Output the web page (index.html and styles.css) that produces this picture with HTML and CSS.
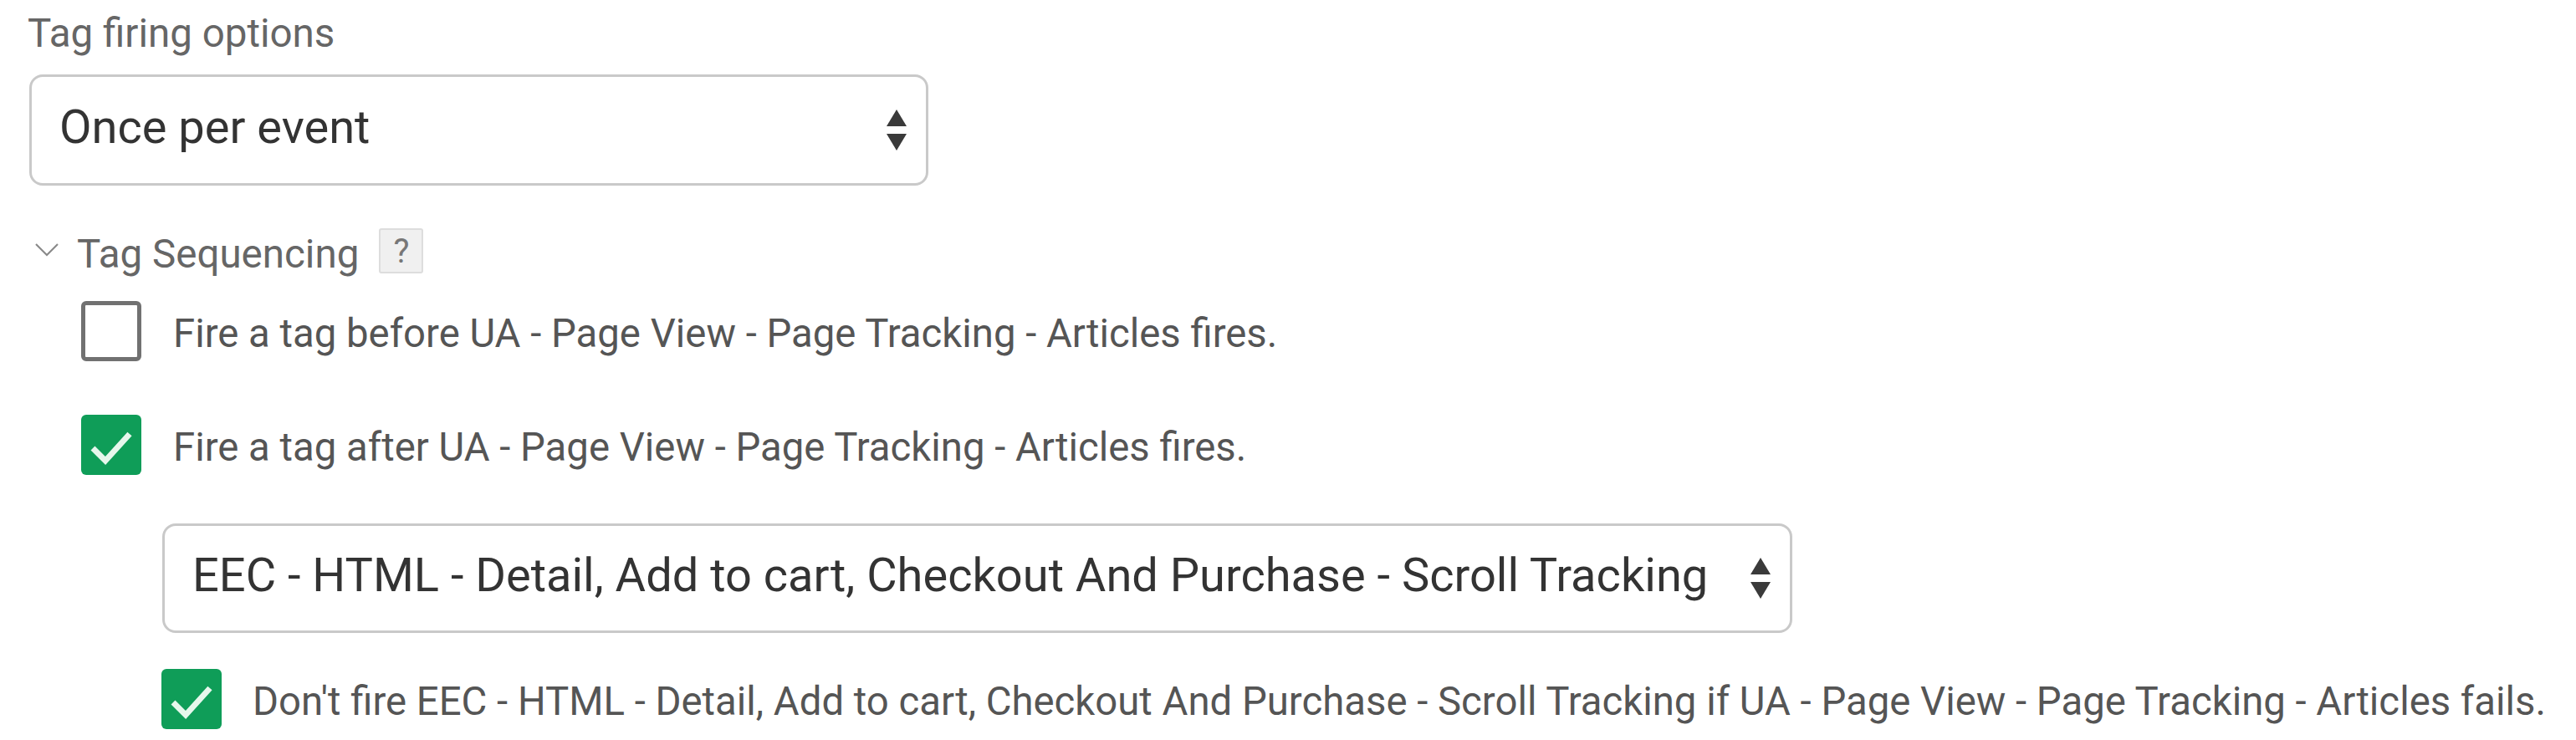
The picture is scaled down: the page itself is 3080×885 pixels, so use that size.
FILE: index.html
```html
<!DOCTYPE html>
<html>
<head>
<meta charset="utf-8">
<title>Tag firing options</title>
<link rel="stylesheet" href="styles.css">
</head>
<body>
<div class="panel">
  <div class="label">Tag firing options</div>
  <div class="select select-main">
    <span class="select-text">Once per event</span>
    <span class="arrows"><span class="up"></span><span class="down"></span></span>
  </div>

  <div class="seq-header">
    <svg class="chevron" width="30" height="18" viewBox="0 0 30 18"><polyline points="2,3 15,16 28,3" fill="none" stroke="#8a8a8a" stroke-width="2.2"/></svg>
    <span class="seq-title">Tag Sequencing</span>
    <span class="help">?</span>
  </div>

  <div class="check-row row-first">
    <span class="box unchecked"></span>
    <span class="row-text">Fire a tag before UA - Page View - Page Tracking - Articles fires.</span>
  </div>

  <div class="check-row row-second">
    <span class="box checked">
      <svg width="72" height="72" viewBox="0 0 72 72"><polyline points="14,40 29,55 58,23" fill="none" stroke="#e6f7ec" stroke-width="7"/></svg>
    </span>
    <span class="row-text">Fire a tag after UA - Page View - Page Tracking - Articles fires.</span>
  </div>

  <div class="nested">
    <div class="select select-tag">
      <span class="select-text">EEC - HTML - Detail, Add to cart, Checkout And Purchase - Scroll Tracking</span>
      <span class="arrows"><span class="up"></span><span class="down"></span></span>
    </div>
    <div class="check-row row-third">
      <span class="box checked">
        <svg width="72" height="72" viewBox="0 0 72 72"><polyline points="14,40 29,55 58,23" fill="none" stroke="#e6f7ec" stroke-width="7"/></svg>
      </span>
      <span class="row-text">Don't fire EEC - HTML - Detail, Add to cart, Checkout And Purchase - Scroll Tracking if UA - Page View - Page Tracking - Articles fails.</span>
    </div>
  </div>
</div>
</body>
</html>
```

FILE: styles.css
```css
html, body {
  margin: 0;
  padding: 0;
  background: #ffffff;
}

body {
  font-family: Roboto, "Liberation Sans", sans-serif;
  color: #555555;
}

.panel {
  display: flex;
  flex-direction: column;
  align-items: flex-start;
}

.label {
  margin-left: 33px;
  font-size: 47.5px;
  line-height: 80px;
  height: 80px;
  color: #666666;
}

.select {
  box-sizing: border-box;
  display: flex;
  align-items: center;
  justify-content: space-between;
  border: 3px solid #c9c9c9;
  border-radius: 16px;
  background: #ffffff;
  padding: 0 23px 0 33px;
}

.select-main {
  margin-left: 35px;
  margin-top: 9px;
  width: 1075px;
  height: 133px;
}

.select-text {
  font-size: 56px;
  color: #333333;
  padding-bottom: 7px;
  white-space: nowrap;
}

.arrows {
  display: flex;
  flex-direction: column;
  align-items: center;
  gap: 9px;
}

.up {
  width: 0;
  height: 0;
  border-left: 12.5px solid transparent;
  border-right: 12.5px solid transparent;
  border-bottom: 20px solid #3a3a3a;
}

.down {
  width: 0;
  height: 0;
  border-left: 12.5px solid transparent;
  border-right: 12.5px solid transparent;
  border-top: 20px solid #3a3a3a;
}

.seq-header {
  margin-left: 41px;
  margin-top: 38px;
  height: 80px;
  display: flex;
  align-items: center;
}

.chevron {
  display: block;
  margin-top: -5px;
}

.seq-title {
  margin-left: 21px;
  font-size: 47.5px;
  color: #666666;
  padding-top: 7px;
}

.help {
  box-sizing: border-box;
  margin-left: 24px;
  width: 53px;
  height: 54px;
  display: flex;
  align-items: center;
  justify-content: center;
  background: #f0f0f0;
  border: 2px solid #dddddd;
  border-radius: 3px;
  font-size: 40px;
  color: #777777;
}

.check-row {
  display: flex;
  align-items: center;
  height: 80px;
  gap: 38px;
}

.row-first {
  margin-left: 97px;
  margin-top: 16px;
}

.row-second {
  margin-left: 97px;
  margin-top: 56px;
}

.box {
  box-sizing: border-box;
  width: 72px;
  height: 72px;
  border-radius: 6px;
  flex: none;
  display: flex;
  align-items: center;
  justify-content: center;
}

.box svg {
  display: block;
}

.unchecked {
  border: 5px solid #717171;
  background: #ffffff;
}

.checked {
  background: #0f9d58;
}

.row-text {
  font-size: 47.3px;
  color: #555555;
  padding-top: 6px;
  white-space: nowrap;
}

.nested {
  margin-left: 194px;
  display: flex;
  flex-direction: column;
  align-items: flex-start;
}

.select-tag {
  margin-top: 54px;
  width: 1949px;
  height: 131px;
  padding-right: 23px;
}

.row-third {
  margin-left: -1px;
  margin-top: 39px;
  gap: 37px;
}
```
